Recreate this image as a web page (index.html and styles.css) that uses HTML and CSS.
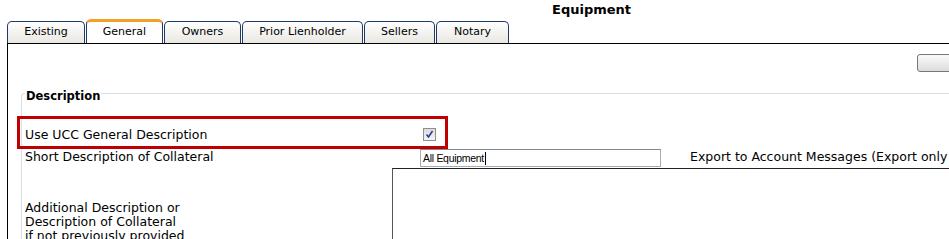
FILE: index.html
```html
<html>
   <head>
      <link rel="stylesheet" href="styles.css">
   </head>
   <body>
      <div class="title">Equipment</div>
      <div class="tabs">
         <div class="tab tabExisting">Existing</div>
         <div class="tab tabGeneral active">General</div>
         <div class="tab tabOwners">Owners</div>
         <div class="tab tabPrior">Prior Lienholder</div>
         <div class="tab tabSellers">Sellers</div>
         <div class="tab tabNotary">Notary</div>
      </div>
      <div class="panel">
         <div class="toolbar">
            <button class="toolButton" type="button"></button>
         </div>
         <fieldset class="descBox">
            <legend>Description</legend>
            <div class="row rowUcc">
               <div class="label uccLabel">Use UCC General Description</div>
               <div class="uccCheck">
                  <svg width="11" height="11" viewBox="0 0 11 11"><path d="M2.5 5.5 L4.5 8 L8.5 2" fill="none" stroke="#2b3d9a" stroke-width="1.6"/></svg>
               </div>
            </div>
            <div class="row rowShort">
               <div class="label shortLabel">Short Description of Collateral</div>
               <div class="shortInput"><span>All Equipment</span><span class="caret"></span></div>
               <div class="exportLabel">Export to Account Messages (Export only</div>
            </div>
            <div class="row rowAdd">
               <div class="label addLabel">Additional Description or<br>Description of Collateral<br>if not previously provided</div>
               <div class="addArea"></div>
            </div>
         </fieldset>
      </div>
      <div class="highlight"></div>
   </body>
</html>
```
FILE: styles.css
```css
body{
margin: 0;
overflow: hidden;
width: 949px;
height: 239px;
font-family: "DejaVu Sans", Verdana, sans-serif;
font-size: 12.5px;
color: #000;
background-color: #fff;
}
.title{
height: 19px;
line-height: 20px;
padding-left: 552px;
font-weight: bold;
font-size: 13px;
}
.tabs{
display: flex;
align-items: flex-end;
height: 24px;
margin-left: 7px;
gap: 1px;
}
.tab{
box-sizing: border-box;
height: 22px;
line-height: 20px;
text-align: center;
border: 1px solid #1f3a68;
border-bottom: none;
border-radius: 5px 5px 0 0;
background: linear-gradient(#ffffff, #e8e7e2);
font-size: 11px;
}
.tab.active{
height: 24px;
line-height: 20px;
border-top: 3px solid #f3a024;
background: #fff;
}
.tabExisting{ width: 78px; }
.tabGeneral{ width: 77px; }
.tabOwners{ width: 77px; }
.tabPrior{ width: 121px; }
.tabSellers{ width: 71px; }
.tabNotary{ width: 73px; }
.panel{
margin-left: 7px;
width: 942px;
height: 195px;
overflow: hidden;
border-top: 1px solid #000;
border-left: 1px solid #000;
}
.toolbar{
height: 40px;
padding-left: 909px;
box-sizing: border-box;
padding-top: 10px;
}
.toolButton{
display: block;
width: 60px;
height: 18px;
border: 1px solid #777;
border-radius: 3px;
background: linear-gradient(#fafafa, #dcdcdc);
}
.descBox{
margin: 0 0 0 13px;
padding: 0 3px;
border: 1px solid #d6dee7;
border-right: none;
border-bottom: none;
border-radius: 4px 0 0 0;
height: 200px;
}
.descBox legend{
padding: 5px 1px 0 1px;
font-weight: bold;
font-size: 11.5px;
line-height: 14px;
}
.row{
display: flex;
}
.rowUcc{
margin-top: 21px;
height: 20px;
align-items: center;
}
.uccLabel{
width: 398px;
}
.uccCheck{
box-sizing: border-box;
width: 13px;
height: 13px;
border: 1px solid #8e8f8f;
background: linear-gradient(#dcdcdc, #f4f4f4);
display: flex;
align-items: center;
justify-content: center;
}
.rowShort{
margin-top: 2px;
height: 21px;
align-items: flex-start;
}
.shortLabel{
width: 395px;
padding-top: 2px;
line-height: 18px;
}
.shortInput{
box-sizing: border-box;
width: 241px;
height: 18px;
margin-top: 3px;
border: 1px solid #a5acb5;
border-top-color: #7f8790;
padding-left: 2px;
font-family: "Liberation Sans", Arial, sans-serif;
font-size: 10.5px;
letter-spacing: -0.3px;
line-height: 16px;
display: flex;
align-items: center;
}
.caret{
display: inline-block;
width: 1px;
height: 13px;
background-color: #000;
margin-left: 1px;
}
.exportLabel{
margin-left: 29px;
padding-top: 1px;
line-height: 20px;
white-space: nowrap;
}
.rowAdd{
margin-top: 1px;
}
.addLabel{
width: 367px;
padding-top: 33px;
line-height: 14px;
white-space: nowrap;
}
.addArea{
width: 600px;
height: 120px;
border-top: 1px solid #222;
border-left: 1px solid #555;
}
.highlight{
position: absolute;
left: 17px;
top: 116px;
width: 425px;
height: 27px;
border: 3px solid #c00000;
}
```
